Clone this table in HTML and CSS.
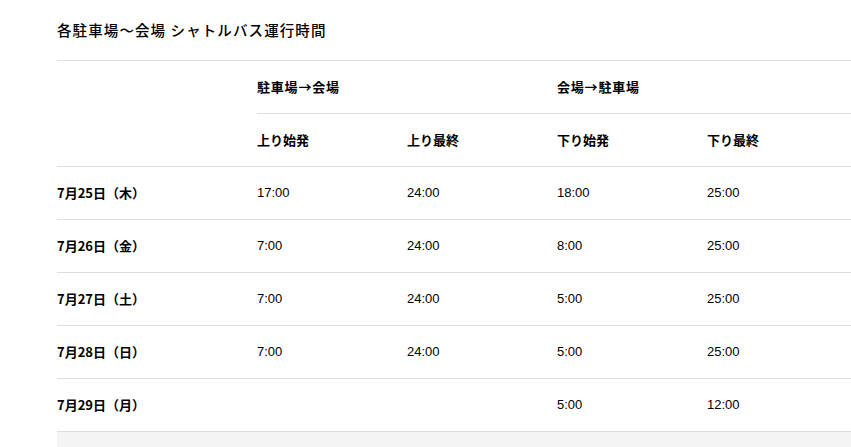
FILE: index.html
```html
<!DOCTYPE html>
<html lang="ja">
<head>
<meta charset="utf-8">
<title>シャトルバス運行時間</title>
<link rel="stylesheet" href="styles.css">
</head>
<body>
<div class="page">
  <h2 class="title">各駐車場～会場 シャトルバス運行時間</h2>
  <table class="timetable">
    <thead>
      <tr>
        <th class="corner" rowspan="2"></th>
        <th class="group" colspan="2">駐車場→会場</th>
        <th class="group" colspan="2">会場→駐車場</th>
      </tr>
      <tr>
        <th>上り始発</th>
        <th>上り最終</th>
        <th>下り始発</th>
        <th>下り最終</th>
      </tr>
    </thead>
    <tbody>
      <tr><th>7月25日（木）</th><td>17:00</td><td>24:00</td><td>18:00</td><td>25:00</td></tr>
      <tr><th>7月26日（金）</th><td>7:00</td><td>24:00</td><td>8:00</td><td>25:00</td></tr>
      <tr><th>7月27日（土）</th><td>7:00</td><td>24:00</td><td>5:00</td><td>25:00</td></tr>
      <tr><th>7月28日（日）</th><td>7:00</td><td>24:00</td><td>5:00</td><td>25:00</td></tr>
      <tr><th>7月29日（月）</th><td></td><td></td><td>5:00</td><td>12:00</td></tr>
    </tbody>
  </table>
  <div class="next"></div>
</div>
</body>
</html>
```
FILE: styles.css
```css
html, body {
  margin: 0;
  padding: 0;
  overflow: hidden;
  background: #fff;
}
.page {
  padding-left: 57px;
  width: 800px;
  color: #000;
  font-family: "Noto Sans CJK JP", "Liberation Sans", sans-serif;
}
.title {
  margin: 0;
  padding: 20px 0 20px;
  font-size: 14.5px;
  line-height: 20px;
  font-weight: 500;
  letter-spacing: 1.1px;
}
.timetable {
  width: 800px;
  border-collapse: separate;
  border-spacing: 0;
  border-top: 1px solid #dddddd;
  table-layout: fixed;
}
.timetable th,
.timetable td {
  height: 52px;
  padding: 0;
  border-bottom: 1px solid #dddddd;
  text-align: left;
  vertical-align: middle;
  font-size: 13px;
  line-height: 16px;
}
.timetable th {
  font-weight: 700;
  font-family: "Noto Sans CJK JP", sans-serif;
}
.timetable .group {
  letter-spacing: 0.8px;
}
.timetable tbody th {
  width: 200px;
}
.timetable .corner {
  width: 200px;
}
.timetable td {
  font-family: "Liberation Sans", Arial, sans-serif;
  font-weight: 400;
}
.next {
  width: 800px;
  height: 16px;
  background: #f4f4f4;
}
```
